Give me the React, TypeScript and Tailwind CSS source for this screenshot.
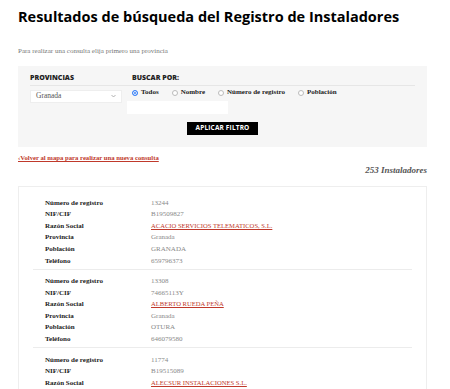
import React from "react";

interface Installer {
  registro: string;
  nif: string;
  razon: string;
  provincia: string;
  poblacion: string;
  telefono: string;
}

const installers: Installer[] = [
  {
    registro: "13244",
    nif: "B19509827",
    razon: "ACACIO SERVICIOS TELEMATICOS, S.L.",
    provincia: "Granada",
    poblacion: "GRANADA",
    telefono: "659796373",
  },
  {
    registro: "13308",
    nif: "74665113Y",
    razon: "ALBERTO RUEDA PEÑA",
    provincia: "Granada",
    poblacion: "OTURA",
    telefono: "646079580",
  },
  {
    registro: "11774",
    nif: "B19515089",
    razon: "ALECSUR INSTALACIONES S.L.",
    provincia: "Granada",
    poblacion: "GRANADA",
    telefono: "958000000",
  },
];

const serif = "font-['Liberation_Serif',serif]";
const sans = "font-['Open_Sans',sans-serif]";

const Radio: React.FC<{ label: string; checked?: boolean }> = ({ label, checked }) => (
  <label className="flex items-center gap-[3px]">
    <span
      className={`w-[6px] h-[6px] rounded-full border ${
        checked ? "border-[#3b82f6] bg-[#3b82f6] ring-1 ring-inset ring-white" : "border-[#bbb] bg-white"
      }`}
    />
    <span className={`${serif} font-bold text-[7px] text-[#222]`}>{label}</span>
  </label>
);

const Row: React.FC<{ label: string; children: React.ReactNode }> = ({ label, children }) => (
  <div className="flex h-[11.6px] items-center">
    <span className={`${serif} font-bold text-[7px] text-[#222] w-[106px]`}>{label}</span>
    <span className={`${serif} text-[7px] text-[#888]`}>{children}</span>
  </div>
);

const App: React.FC = () => {
  return (
    <div className="bg-white w-[450px] h-[389px] overflow-hidden">
      <div className="ml-[18px] w-[409px]">
        <h1 className={`${sans} font-bold text-[14.5px] text-black pt-[7px] leading-[20px] whitespace-nowrap`}>
          Resultados de búsqueda del Registro de Instaladores
        </h1>
        <p className={`${serif} text-[7px] text-[#777] mt-[19px] leading-[10px]`}>
          Para realizar una consulta elija primero una provincia
        </p>

        {/* Filter panel */}
        <div className="bg-[#f6f6f6] mt-[10px] h-[81px] px-[12px] pt-[7px]">
          <div className="flex border-b border-[#e6e6e6] pb-[1px]">
            <span className={`${sans} font-extrabold text-[7px] text-[#222] w-[102px]`}>PROVINCIAS</span>
            <span className={`${sans} font-extrabold text-[7px] text-[#222]`}>BUSCAR POR:</span>
          </div>
          <div className="flex mt-[4px]">
            <div className="w-[92px] h-[13px] bg-white border border-[#eee] flex items-center justify-between px-[5px]">
              <span className={`${serif} text-[7.5px] text-[#555]`}>Granada</span>
              <svg width="5" height="4" viewBox="0 0 10 6">
                <path d="M1 1l4 4 4-4" stroke="#999" strokeWidth="1.5" fill="none" />
              </svg>
            </div>
            <div className="ml-[5px] flex flex-col">
              <div className="flex gap-[13px] pl-[5px] h-[10px] items-center -mt-[2px]">
                <Radio label="Todos" checked />
                <Radio label="Nombre" />
                <Radio label="Número de registro" />
                <Radio label="Población" />
              </div>
              <div className="w-[101px] h-[13px] bg-white mt-[3px]" />
            </div>
          </div>
          <div className="flex mt-[8px] pl-[157px]">
            <button className={`${sans} bg-black text-white font-bold text-[6.5px] w-[71px] h-[13px] tracking-wide`}>
              APLICAR FILTRO
            </button>
          </div>
        </div>

        <a className={`${serif} block mt-[6px] text-[6.7px] font-bold text-[#c0392b] underline leading-[10px]`}>
          ‹Volver al mapa para realizar una nueva consulta
        </a>
        <div className={`${serif} text-right font-bold italic text-[9px] text-[#555] mt-[1px] leading-[12px]`}>
          253 Instaladores
        </div>

        {/* Results */}
        <div className="border border-[#eeeeee] mt-[10px] px-[14px] pt-[10px]">
          {installers.map((it, i) => (
            <div key={i} className={`${i > 0 ? "border-t border-[#ececec] pt-[6px]" : ""} pb-[2px]`}>
              <div className="pl-[12px]">
                <Row label="Número de registro">{it.registro}</Row>
                <Row label="NIF/CIF">{it.nif}</Row>
                <Row label="Razón Social">
                  <span className="text-[#c0392b] text-[6.6px] underline">{it.razon}</span>
                </Row>
                <Row label="Provincia">{it.provincia}</Row>
                <Row label="Población">{it.poblacion}</Row>
                <Row label="Teléfono">{it.telefono}</Row>
              </div>
            </div>
          ))}
        </div>
      </div>
    </div>
  );
};

export default App;
